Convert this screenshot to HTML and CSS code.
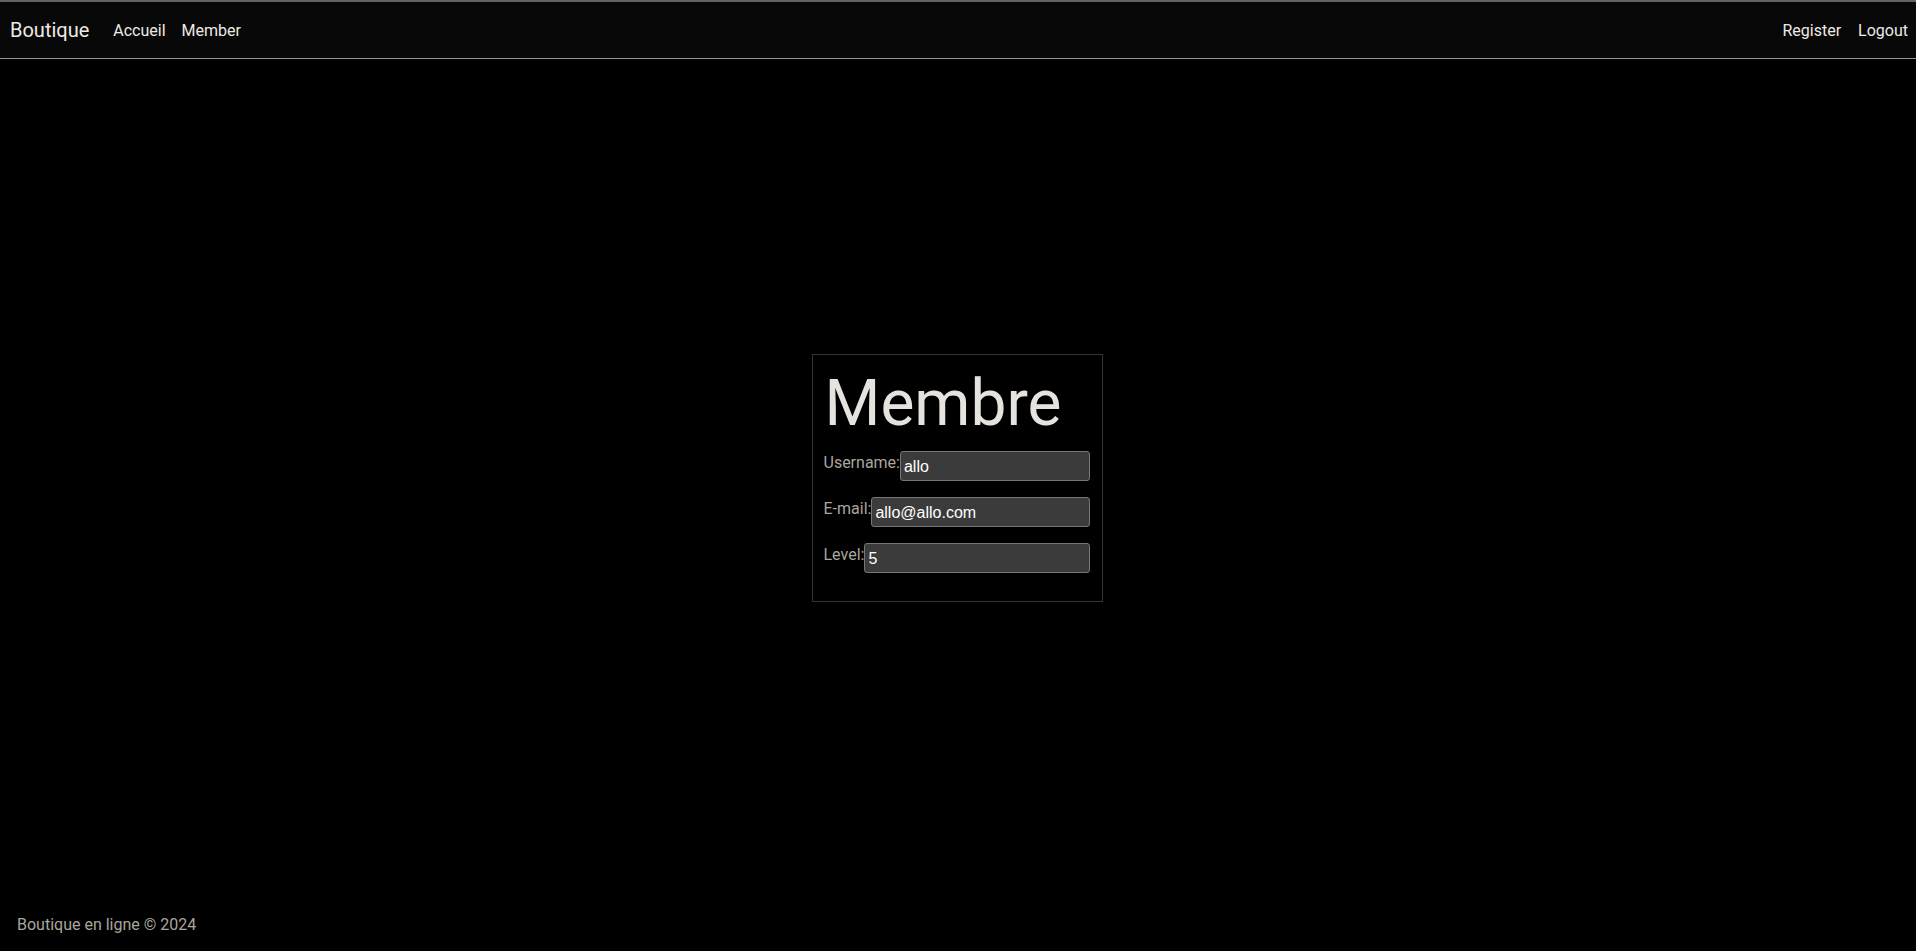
FILE: index.html
```html
<!DOCTYPE html>
<html lang="fr">
<head>
<meta charset="utf-8">
<title>Boutique</title>
<link rel="stylesheet" href="styles.css">
</head>
<body>
<header class="navbar">
  <div class="nav-left">
    <a class="brand" href="#">Boutique</a>
    <a class="nav-link" href="#">Accueil</a>
    <a class="nav-link" href="#">Member</a>
  </div>
  <div class="nav-right">
    <a class="nav-link" href="#">Register</a>
    <a class="nav-link" href="#">Logout</a>
  </div>
</header>
<main class="main">
  <section class="card">
    <h1 class="title">Membre</h1>
    <div class="row">
      <label class="label" for="u">Username:</label>
      <input class="field" id="u" type="text" value="allo">
    </div>
    <div class="row">
      <label class="label" for="e">E-mail:</label>
      <input class="field" id="e" type="text" value="allo@allo.com">
    </div>
    <div class="row">
      <label class="label" for="l">Level:</label>
      <input class="field" id="l" type="text" value="5">
    </div>
  </section>
</main>
<footer class="footer">Boutique en ligne © 2024</footer>
</body>
</html>
```

FILE: styles.css
```css
* { box-sizing: border-box; }
html, body { height: 100%; }
body {
  margin: 0;
  background: #000;
  color: #dedad4;
  font-family: Roboto, "Liberation Sans", sans-serif;
  font-size: 16px;
  display: flex;
  flex-direction: column;
}
.navbar {
  height: 59px;
  background: #080808;
  border-top: 2px solid #636363;
  border-bottom: 1px solid #9d948b;
  display: flex;
  align-items: center;
  justify-content: space-between;
  padding: 0 8px 0 10px;
  flex-shrink: 0;
}
.nav-left, .nav-right { display: flex; align-items: center; }
.brand {
  color: #eeeae4;
  text-decoration: none;
  font-size: 20px;
  margin-right: 24px;
}
.nav-link {
  color: #eeeae4;
  text-decoration: none;
  font-size: 16px;
}
.nav-left .nav-link { margin-right: 16px; }
.nav-right .nav-link { margin-left: 17px; }
.main {
  flex: 1;
  display: flex;
  align-items: center;
  justify-content: center;
  padding: 0 2px 16px 0;
}
.card {
  width: 291px;
  border: 1px solid #333;
  padding: 10px 12px 12px 11px;
}
.title {
  margin: 0 0 9px 0;
  font-weight: 400;
  font-size: 64px;
  line-height: 77px;
  color: #e6e3de;
  padding-left: 1px;
}
.row {
  display: flex;
  align-items: flex-start;
  margin-bottom: 16px;
}
.label {
  color: #aaa59e;
  font-size: 16px;
  line-height: 24px;
}
.field {
  flex: 1;
  min-width: 0;
  height: 30px;
  background: #3b3b3b;
  border: 1px solid #767676;
  border-radius: 3px;
  color: #fff;
  font-family: "Liberation Sans", Arial, sans-serif;
  font-size: 16px;
  padding: 2px 3px 0 3px;
}
.footer {
  flex-shrink: 0;
  padding: 0 17px 14px;
  color: #aaa59e;
  font-size: 16px;
  line-height: 24px;
}
```
